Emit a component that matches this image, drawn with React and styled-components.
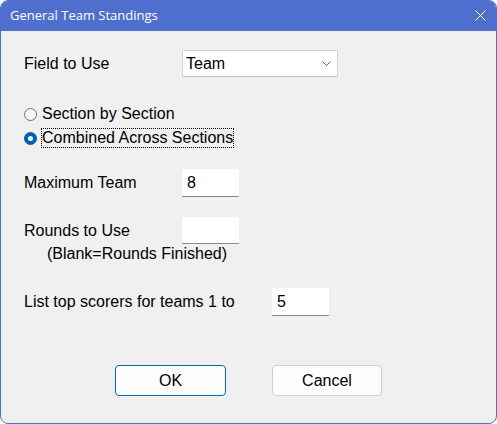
import React from 'react';
import styled, { createGlobalStyle } from 'styled-components';

const Global = createGlobalStyle`
  html, body { margin:0; padding:0; background:#ffffff; }
  * { box-sizing:border-box; }
`;

const Window = styled.div`
  width:497px;
  height:424px;
  border:1px solid #4f6fcf;
  border-radius:8px;
  overflow:hidden;
  background:#f0f0f0;
  display:flex;
  flex-direction:column;
  font-family:"Liberation Sans", Arial, sans-serif;
  font-size:16px;
  color:#000;
`;

const TitleBar = styled.div`
  height:30px;
  background:#4f6fcf;
  color:#fff;
  display:flex;
  align-items:center;
  justify-content:space-between;
  padding:0 9px 2px 9px;
  font-family:"Open Sans", "Noto Sans", sans-serif;
  font-size:13px;
`;

const Close = styled.svg`
  width:11px;
  height:11px;
  margin-right:1px;
`;

const Body = styled.div`
  display:flex;
  flex-direction:column;
  padding:19px 0 0 23px;
`;

const Row = styled.div`
  display:flex;
  align-items:center;
  height:${p => p.h || 28}px;
  margin-top:${p => p.mt || 0}px;
`;

const Label = styled.div`
  width:${p => p.w || 158}px;
  flex-shrink:0;
`;

const Select = styled.div`
  width:156px;
  height:27px;
  background:#fff;
  border:1px solid #d3d3d3;
  border-bottom-color:#c0c0c0;
  border-radius:2px;
  display:flex;
  align-items:center;
  justify-content:space-between;
  padding:0 6px 0 3px;
`;

const TextBox = styled.div`
  width:57px;
  height:${p => p.h || 28}px;
  background:#fff;
  border-bottom:1px solid #8a8a8a;
  display:flex;
  align-items:center;
  padding-left:5px;
`;

const RadioRow = styled.label`
  display:flex;
  align-items:center;
  height:20px;
  margin-top:${p => p.mt || 0}px;
`;

const RadioDot = styled.span`
  width:13px;
  height:13px;
  border-radius:50%;
  flex-shrink:0;
  margin-right:4px;
  position:relative;
  border:1px solid ${p => (p.checked ? '#005fb8' : '#707070')};
  background:${p => (p.checked ? '#005fb8' : '#f6f6f6')};
  &::after {
    content:'';
    display:${p => (p.checked ? 'block' : 'none')};
    position:absolute;
    left:3px;
    top:3px;
    width:5px;
    height:5px;
    border-radius:50%;
    background:#fff;
  }
`;

const RadioText = styled.span`
  border:1px dotted ${p => (p.focused ? '#000' : 'transparent')};
  height:20px;
  display:flex;
  align-items:center;
`;

const Note = styled.div`
  padding-left:23px;
  height:19px;
  display:flex;
  align-items:center;
`;

const Buttons = styled.div`
  display:flex;
  gap:46px;
  padding-left:91px;
  margin-top:49px;
`;

const Button = styled.button`
  width:${p => p.w || 111}px;
  height:31px;
  border-radius:4px;
  background:#fdfdfd;
  border:1px solid ${p => (p.primary ? '#0067c0' : '#d0d0d0')};
  font-family:"Liberation Sans", Arial, sans-serif;
  font-size:16px;
  color:#000;
  padding:0;
`;

export default function App() {
  return (
    <>
      <Global />
      <Window>
        <TitleBar>
          <span>General Team Standings</span>
          <Close viewBox="0 0 11 11">
            <path d="M0.5 0.5 L10.5 10.5 M10.5 0.5 L0.5 10.5" stroke="#fff" strokeWidth="1" fill="none" />
          </Close>
        </TitleBar>
        <Body>
          <Row h={27}>
            <Label>Field to Use</Label>
            <Select>
              <span>Team</span>
              <svg width="9" height="6" viewBox="0 0 9 6">
                <path d="M0.5 0.5 L4.5 4.5 L8.5 0.5" stroke="#606060" strokeWidth="1" fill="none" />
              </svg>
            </Select>
          </Row>
          <RadioRow mt={27}>
            <RadioDot />
            <RadioText>Section by Section</RadioText>
          </RadioRow>
          <RadioRow mt={4}>
            <RadioDot checked />
            <RadioText focused>Combined Across Sections</RadioText>
          </RadioRow>
          <Row mt={21}>
            <Label>Maximum Team</Label>
            <TextBox>8</TextBox>
          </Row>
          <Row h={27} mt={20}>
            <Label>Rounds to Use</Label>
            <TextBox h={27} />
          </Row>
          <Note>(Blank=Rounds Finished)</Note>
          <Row mt={25}>
            <Label w={248}>List top scorers for teams 1 to</Label>
            <TextBox>5</TextBox>
          </Row>
          <Buttons>
            <Button primary>OK</Button>
            <Button w={110}>Cancel</Button>
          </Buttons>
        </Body>
      </Window>
    </>
  );
}
